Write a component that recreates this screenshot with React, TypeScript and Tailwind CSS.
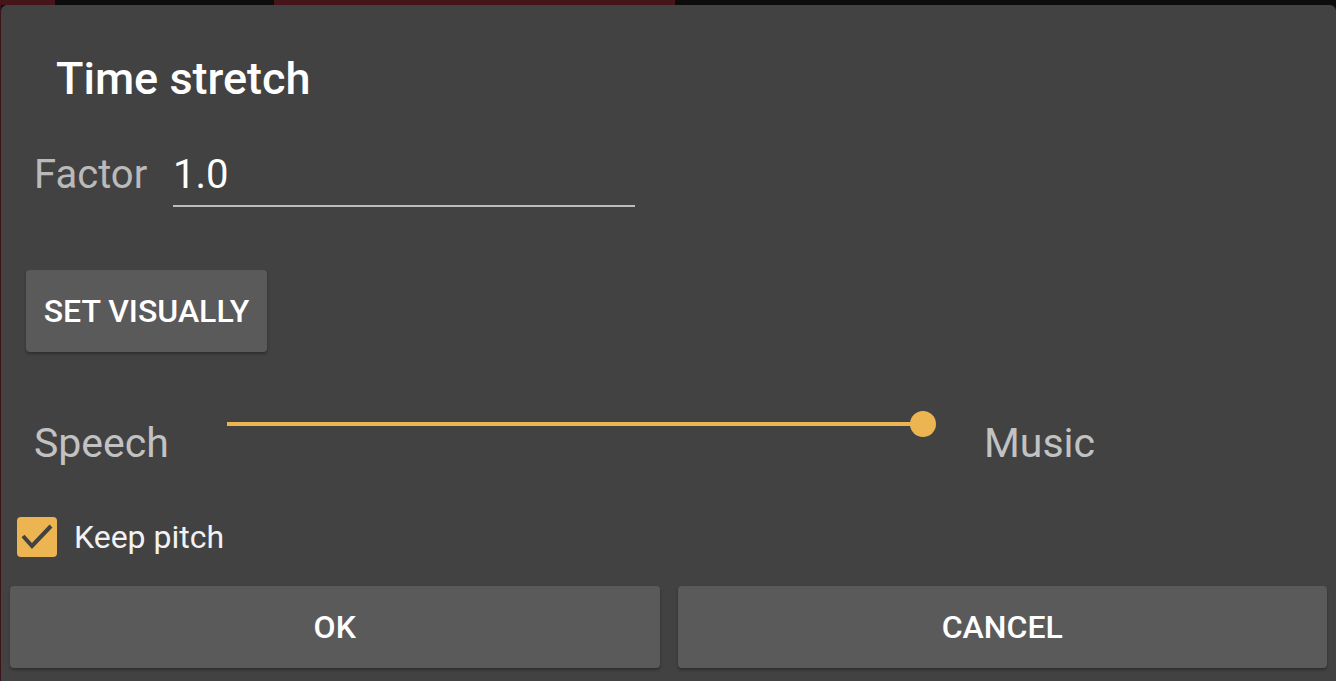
import React, { useState } from "react";

const font = { fontFamily: "Roboto, 'Noto Sans', sans-serif" };

const App = () => {
  const [keepPitch, setKeepPitch] = useState<boolean>(true);
  const [factor, setFactor] = useState<string>("1.0");

  return (
    <div className="w-full h-[681px] flex flex-col bg-[#0c0c0c] overflow-hidden" style={font}>
      {/* strip of the screen behind the dialog */}
      <div className="flex h-[5px] shrink-0">
        <div className="w-[55px] bg-[#45151a]" />
        <div className="w-[219px] bg-[#0c0c0c]" />
        <div className="w-[401px] bg-[#45151a]" />
        <div className="flex-1 bg-[#0c0c0c]" />
      </div>

      <div className="flex flex-1 min-h-0">
        <div className="w-[1px] bg-[#3a1418]" />

        {/* Dialog */}
        <div className="flex-1 bg-[#424242] rounded-t-[6px] flex flex-col pt-[48px]">
          <h1 className="ml-[55px] text-[45px] leading-[52px] font-medium text-white">Time stretch</h1>

          {/* Factor */}
          <div className="flex items-start mt-[48px] ml-[33px]">
            <span className="w-[113px] text-[40px] leading-[44px] text-[#bababa]">Factor</span>
            <div className="ml-[26px] w-[462px] border-b-2 border-[#bdbdbd] pb-[8px]">
              <input
                value={factor}
                onChange={(e) => setFactor(e.target.value)}
                className="w-full bg-transparent outline-none text-[40px] leading-[44px] h-[44px] text-white"
              />
            </div>
          </div>

          <button className="mt-[63px] ml-[25px] w-[241px] h-[82px] rounded-[4px] bg-[#5a5a5b] shadow-[0_2px_3px_rgba(0,0,0,0.3)] text-white text-[32px] font-medium">
            SET VISUALLY
          </button>

          {/* Speech / Music slider */}
          <div className="flex items-start mt-[59px]">
            <span className="ml-[33px] w-[133px] mt-[8px] text-[41px] leading-[48px] text-[#c2c2c2]">Speech</span>
            <div className="ml-[60px] w-[709px] h-[26px] relative flex items-center">
              <div className="w-[696px] h-[4px] bg-[#edb452]" />
              <div className="absolute right-0 top-0 w-[26px] h-[26px] rounded-full bg-[#edb452]" />
            </div>
            <span className="ml-[48px] mt-[8px] text-[41px] leading-[48px] text-[#c2c2c2]">Music</span>
          </div>

          {/* Keep pitch */}
          <label className="flex items-center mt-[50px] ml-[16px] cursor-pointer">
            <span
              onClick={() => setKeepPitch(!keepPitch)}
              className={`w-[40px] h-[40px] rounded-[4px] flex items-center justify-center ${
                keepPitch ? "bg-[#edb452]" : "border-2 border-[#bdbdbd]"
              }`}
            >
              {keepPitch && (
                <svg width="40" height="40" viewBox="0 0 40 40">
                  <path d="M6 19 L15 29 L34 9" fill="none" stroke="#424242" strokeWidth="4" />
                </svg>
              )}
            </span>
            <span className="ml-[17px] text-[32px] leading-[36px] text-[#f2f2f2]">Keep pitch</span>
          </label>

          {/* Action buttons */}
          <div className="flex gap-[18px] px-[9px] mt-[29px]">
            <button className="flex-1 h-[82px] rounded-[4px] bg-[#5a5a5b] shadow-[0_2px_3px_rgba(0,0,0,0.3)] text-white text-[32px] font-medium">
              OK
            </button>
            <button className="flex-1 h-[82px] rounded-[4px] bg-[#5a5a5b] shadow-[0_2px_3px_rgba(0,0,0,0.3)] text-white text-[32px] font-medium">
              CANCEL
            </button>
          </div>
        </div>
      </div>
    </div>
  );
};

export default App;
